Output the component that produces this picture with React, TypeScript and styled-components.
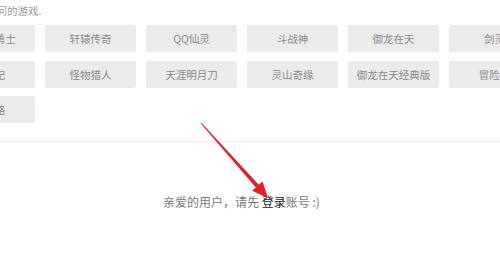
import React from "react";
import styled, { createGlobalStyle } from "styled-components";

const Global = createGlobalStyle`
  html, body { margin: 0; padding: 0; background: #fff; }
  body { overflow: hidden; font-family: "Noto Sans CJK SC", "Noto Sans", sans-serif; }
`;

const Page = styled.div`
  position: relative;
  width: 500px;
  height: 273px;
  overflow: hidden;
  background: #fff;
`;

const GameSection = styled.section`
  margin-left: -56px;
  padding-top: 4px;
`;

const Title = styled.div`
  padding-left: 21px;
  font-size: 10.5px;
  line-height: 14px;
  color: #9a9a9a;
  white-space: nowrap;
`;

const GameGrid = styled.div`
  margin-top: 7px;
  display: grid;
  grid-template-columns: repeat(6, 91px);
  grid-auto-rows: 27px;
  column-gap: 10px;
  row-gap: 8.5px;
`;

const GameButton = styled.div`
  display: flex;
  align-items: center;
  justify-content: center;
  background: #ebebeb;
  border-radius: 2px;
  color: #8a8a8a;
  font-size: 10.5px;
  white-space: nowrap;
  overflow: hidden;
`;

const Divider = styled.div`
  margin-top: 18px;
  height: 1px;
  background: #f0f0f0;
`;

const Message = styled.p`
  margin: 50px 0 0;
  padding-right: 17px;
  text-align: center;
  font-size: 12px;
  line-height: 20px;
  color: #7a7a7a;
  white-space: nowrap;
`;

const LoginLink = styled.span`
  color: #222;
`;

const ArrowLayer = styled.svg`
  position: absolute;
  left: 0;
  top: 0;
  pointer-events: none;
`;

const games = [
  "大天使勇士", "轩辕传奇", "QQ仙灵", "斗战神", "御龙在天", "剑灵",
  "创世纪", "怪物猎人", "天涯明月刀", "灵山奇缘", "御龙在天经典版", "冒险岛",
  "英雄路",
];

export default function App() {
  return (
    <Page>
      <Global />
      <GameSection>
        <Title>最近访问的游戏.</Title>
        <GameGrid>
          {games.map((g) => (
            <GameButton key={g}>{g}</GameButton>
          ))}
        </GameGrid>
      </GameSection>
      <Divider />
      <Message>
        亲爱的用户，请先 <LoginLink>登录</LoginLink>账号 :)
      </Message>
      <ArrowLayer width="500" height="273" viewBox="0 0 500 273">
        <polygon
          points="200.6,123.3 255.8,187.4 252.1,190.8 268,198 262.5,181.4 258.8,184.8 201.4,122.7"
          fill="#e3202a"
        />
      </ArrowLayer>
    </Page>
  );
}
